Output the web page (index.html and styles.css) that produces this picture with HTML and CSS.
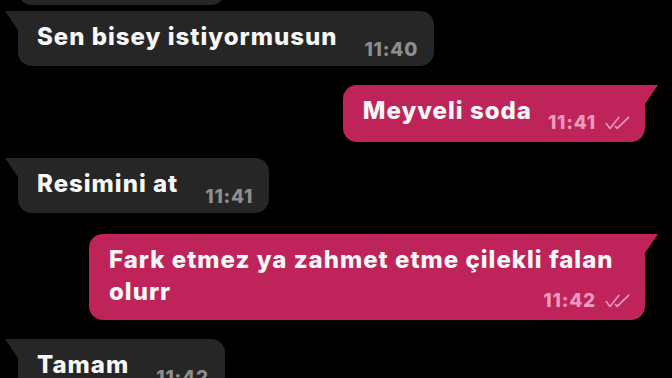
FILE: index.html
```html
<!DOCTYPE html>
<html lang="tr">
<head>
<meta charset="utf-8">
<title>Sohbet</title>
<link rel="stylesheet" href="styles.css">
</head>
<body>
<div class="chat">
  <div class="row in">
    <div class="bubble"><span class="text">Tamam</span><span class="meta"><span class="time">11:39</span></span></div>
  </div>
  <div class="row in cont">
    <div class="bubble"><span class="text">Sen bisey istiyormusun</span><span class="meta"><span class="time">11:40</span></span></div>
  </div>
  <div class="row out">
    <div class="bubble"><span class="text">Meyveli soda</span><span class="meta"><span class="time">11:41</span><svg class="ticks" viewBox="0 0 25 14" width="25" height="14"><path d="M1.2 7.6 L5 12.4 L13.8 1.4"/><path d="M10.6 10.6 L12.2 12.4 L23.6 1.4"/></svg></span></div>
  </div>
  <div class="row in tight">
    <div class="bubble"><span class="text">Resimini at</span><span class="meta"><span class="time">11:41</span></span></div>
  </div>
  <div class="row out loose">
    <div class="bubble multi"><span class="text">Fark etmez ya zahmet etme çilekli falan olurr</span><span class="meta"><span class="time">11:42</span><svg class="ticks" viewBox="0 0 25 14" width="25" height="14"><path d="M1.2 7.6 L5 12.4 L13.8 1.4"/><path d="M10.6 10.6 L12.2 12.4 L23.6 1.4"/></svg></span></div>
  </div>
  <div class="row in">
    <div class="bubble"><span class="text">Tamam</span><span class="meta"><span class="time">11:42</span></span></div>
  </div>
</div>
</body>
</html>
```
FILE: styles.css
```css
html, body {
  margin: 0;
  background: #000;
}
body {
  width: 672px;
  height: 378px;
  overflow: hidden;
  font-family: Inter, "Open Sans", sans-serif;
}
.chat {
  display: flex;
  flex-direction: column;
  margin-top: -50px;
}
.row {
  display: flex;
  margin-top: 19px;
}
.row:first-child {
  margin-top: 0;
}
.row.cont {
  margin-top: 6px;
}
.row.tight {
  margin-top: 16px;
}
.row.loose {
  margin-top: 21px;
}
.row.in {
  justify-content: flex-start;
  padding-left: 18px;
}
.row.out {
  justify-content: flex-end;
  padding-right: 27px;
}
.bubble {
  position: relative;
  display: flex;
  box-sizing: border-box;
  max-width: 556px;
  border-radius: 14px;
}
.in .bubble {
  background: #262626;
  border-top-left-radius: 0;
  padding: 10px 16px 6px 19px;
  gap: 27px;
}
.out .bubble {
  background: #be2459;
  border-top-right-radius: 0;
  padding: 10px 15px 9px 20px;
  gap: 16px;
  min-height: 57px;
}
.bubble::before {
  content: "";
  position: absolute;
  top: 0;
  width: 13px;
  height: 19px;
  background: inherit;
}
.in .bubble::before {
  left: -13px;
  clip-path: polygon(0 0, 100% 0, 100% 100%);
}
.out .bubble::before {
  right: -13px;
  clip-path: polygon(0 0, 100% 0, 0 100%);
}
.text {
  align-self: flex-start;
  font-size: 24px;
  line-height: 32px;
  font-weight: 800;
  letter-spacing: 1px;
  color: #f7f7f7;
}
.in .text {
  margin-bottom: 7px;
}
.out .text {
  margin-bottom: 3px;
}
.meta {
  align-self: flex-end;
  display: flex;
  align-items: center;
  gap: 9px;
  font-size: 19px;
  line-height: 20px;
  font-weight: 800;
  letter-spacing: 0.8px;
  white-space: nowrap;
}
.in .meta {
  color: #8e8e8e;
}
.out .meta {
  color: #f19abd;
}
.ticks {
  fill: none;
  stroke: #f19abd;
  stroke-width: 1.6;
  stroke-linecap: round;
  stroke-linejoin: round;
}
.bubble.multi {
  display: grid;
}
.bubble.multi > .text,
.bubble.multi > .meta {
  grid-area: 1 / 1;
}
.bubble.multi > .meta {
  justify-self: end;
}
```
